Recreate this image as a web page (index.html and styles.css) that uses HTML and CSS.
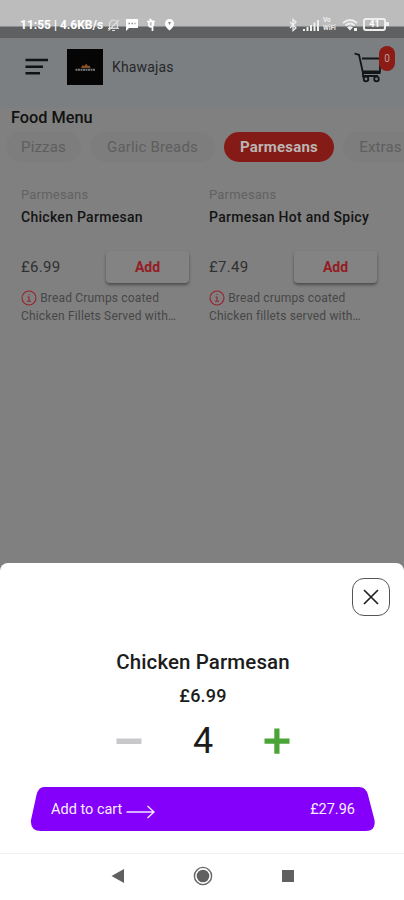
FILE: index.html
```html
<!DOCTYPE html>
<html lang="en">
<head>
<meta charset="utf-8">
<title>Khawajas</title>
<link rel="stylesheet" href="styles.css">
</head>
<body>
<div class="phone">
  <div class="status">
    <div class="status-left">
      <span class="clock">11:55 | 4.6KB/s</span>
      <svg width="13" height="14" viewBox="0 0 13 14" fill="none" stroke="#ddd" stroke-width="1.2"><path d="M2.5 10V6a4 4 0 0 1 8 0v4zM1 10.5h11M1.5 12.5L12 2M5 12.5h3"/></svg>
      <svg class="chat" width="14" height="13" viewBox="0 0 14 13"><path fill="#fff" d="M1 1h12v9H4l-3 3z"/><path stroke="#888" stroke-width="1.5" stroke-dasharray="1.5 1.5" d="M3.5 5.5h7"/></svg>
      <svg class="pay" width="10" height="14" viewBox="0 0 10 14" fill="none" stroke="#fff" stroke-width="1.7"><path d="M1 3.5h8M3.5 1l3 2.500v9.500M3 4v3.500q0 1.500 3.500 1.500M7 4q2 4-3.500 5"/></svg>
      <svg class="pin" width="11" height="13" viewBox="0 0 11 13"><path fill="#fff" d="M5.500 1a4.500 4.500 0 0 1 4.500 4.500Q10 9 5.500 12.500Q1 9 1 5.500A4.500 4.500 0 0 1 5.500 1"/><path fill="#888" d="M4 4h3L5.500 7z"/></svg>
    </div>
    <div class="status-right">
      <svg width="9" height="14" viewBox="0 0 9 14" fill="none" stroke="#eee" stroke-width="1.300"><path d="M1 4l6 6-3 2.500v-11L7 4l-6 6"/></svg>
      <svg class="signal" width="16" height="12" viewBox="0 0 16 12" fill="#eee"><path d="M0 10h2v2H0zM3.500 8h2v4h-2zM7 6h2v6H7zM10.500 3.500h2V12h-2zM14 1h2v11h-2z"/></svg>
      <span class="volte"><span>Vo</span><span>WiFi</span></span>
      <svg class="wifi" width="16" height="14" viewBox="0 0 16 14" fill="none" stroke="#eee" stroke-width="1.700"><path d="M1 5q7-6 14 0M3.500 7.500q4.500-4 9 0"/><path fill="#eee" stroke="none" d="M5 9.200q3-2 6 0l-3 3.300zM12 10h3v3h-3z"/></svg>
      <span class="battery">41</span>
    </div>
  </div>

  <header class="header">
    <svg class="menu" width="24" height="18" viewBox="0 0 24 18" fill="none" stroke="#111214" stroke-width="2.600"><path d="M.5 2h22.500M.5 8.700h17.500M.5 15.300h14.500"/></svg>
    <svg class="logo" width="36" height="36" viewBox="0 0 36 36"><path fill="#050505" d="M0 0h36v36H0z"/><path fill="#84502a" d="M14 19l1.500-3 2 1 1.500-2.500 2 2.500 1.500-.5 1 2.500z"/><path stroke="#777" stroke-width="2" stroke-dasharray="2 .5" d="M8.500 20.800h19.500"/></svg>
    <span class="shop">Khawajas</span>
    <div class="cart">
      <svg width="30" height="32" viewBox="0 0 30 32" fill="none" stroke="#141517" stroke-width="1.800"><path d="M.5 1.500l4.500 1.300 4 18.200h17.500M8 6.500H28M8.700 19.500H26V9"/><circle cx="12" cy="27" r="2.300"/><circle cx="22.500" cy="27" r="2.300"/><path d="M9 20.500v5M9 24h15"/></svg>
      <span class="badge">0</span>
    </div>
  </header>

  <main class="main">
    <h1>Food Menu</h1>
    <nav class="tabs">
      <span class="tab tab-pizza">Pizzas</span>
      <span class="tab tab-garlic">Garlic Breads</span>
      <span class="tab active">Parmesans</span>
      <span class="tab tab-extras">Extras</span>
    </nav>
    <div class="items">
      <article class="item">
        <div class="category">Parmesans</div>
        <h2>Chicken Parmesan</h2>
        <div class="buy"><span class="price">£6.99</span><span class="add">Add</span></div>
        <p><svg class="info" width="16" height="16" viewBox="0 0 16 16" fill="none" stroke="#96232a" stroke-width="1.100"><circle cx="8" cy="8" r="7"/><path d="M6.500 7H8v4M6 11.200h4M7.500 4.500h1"/></svg> Bread Crumps coated<br><span class="second">Chicken Fillets Served with…</span></p>
      </article>
      <article class="item">
        <div class="category">Parmesans</div>
        <h2>Parmesan Hot and Spicy</h2>
        <div class="buy"><span class="price">£7.49</span><span class="add">Add</span></div>
        <p><svg class="info" width="16" height="16" viewBox="0 0 16 16" fill="none" stroke="#96232a" stroke-width="1.100"><circle cx="8" cy="8" r="7"/><path d="M6.500 7H8v4M6 11.200h4M7.500 4.500h1"/></svg> Bread crumps coated<br><span class="second">Chicken fillets served with…</span></p>
      </article>
    </div>
  </main>

  <section class="sheet">
    <div class="close"><svg width="16" height="16" viewBox="0 0 16 16" stroke="#222" stroke-width="1.700"><path d="M1 1l14 14M15 1L1 15"/></svg></div>
    <h3>Chicken Parmesan</h3>
    <div class="unit">£6.99</div>
    <div class="stepper">
      <svg width="26" height="26" viewBox="0 0 26 26"><path fill="#c8c7ca" d="M.5 10.500h25v5.500H.5z"/></svg>
      <span class="qty">4</span>
      <svg width="26" height="26" viewBox="0 0 26 26"><path fill="#4aa536" d="M10.300.5h5.200v10h10v5.300h-10v10h-5.200v-10H.5v-5.300h9.800z"/></svg>
    </div>
    <div class="checkout">
      <svg class="shape" width="346" height="44" viewBox="0 0 346 44"><path fill="#8400fb" d="M15 0H330Q337 0 339 8L345.500 33Q347 44 337 44H12Q1 44 2 33L7.500 8Q9.500 0 15 0Z"/></svg>
      <span class="label">Add to cart</span>
      <svg class="arrow" width="29" height="14" viewBox="0 0 29 14" fill="none" stroke="#f4e9ff" stroke-width="1.400"><path d="M.5 7H28M21.500 1L28 7l-6.500 6"/></svg>
      <span class="total">£27.96</span>
    </div>
  </section>

  <footer class="navbar">
    <svg width="14" height="16" viewBox="0 0 14 16"><path fill="#606060" d="M13 1v14L.5 8z"/></svg>
    <svg width="20" height="20" viewBox="0 0 20 20"><circle cx="10" cy="10" r="8.600" fill="none" stroke="#666" stroke-width="1.400"/><circle cx="10" cy="10" r="6.300" fill="#606060"/></svg>
    <svg width="14" height="14" viewBox="0 0 14 14"><path fill="#606060" d="M1 1h12v12H1z"/></svg>
  </footer>
</div>
</body>
</html>
```
FILE: styles.css
```css
* { box-sizing: border-box; }
body { margin: 0; font-family: Roboto, "Liberation Sans", sans-serif; }
svg { display: block; flex: none; }
h1, h2, h3, p { margin: 0; }
.phone { width: 404px; height: 900px; overflow: hidden; display: flex; flex-direction: column; background: #808080; white-space: nowrap; }

.status { height: 38px; flex: none; padding: 11px 18px 0 20px; display: flex; justify-content: space-between; background: linear-gradient(#bcbcbc 0 26px, #5f6061 27px); color: #fff; }
.status-left, .status-right { display: flex; align-items: center; height: 27px; }
.clock { font-size: 12px; font-weight: 700; width: 87px; }
.chat { margin-left: 5px; }
.pay { margin-left: 7px; }
.pin { margin-left: 8px; }
.signal { margin-left: 5px; }
.volte { margin-left: 4px; width: 15px; display: grid; gap: 1px; font-size: 6.500px; line-height: 7px; font-weight: 700; color: #eee; }
.wifi { margin-left: 4px; }
.battery { margin-left: 5px; width: 23px; height: 13px; border: 2px solid #eee; border-radius: 3px; font-size: 9px; line-height: 9px; font-weight: 700; text-align: center; position: relative; }
.battery::after { content: ""; position: absolute; right: -5px; top: 2px; width: 3px; height: 4px; background: #eee; }

.header { height: 70px; flex: none; background: #7c7f81; display: flex; align-items: flex-start; padding: 11px 9px 0 25px; }
.menu { margin-top: 9px; }
.logo { margin-left: 18px; }
.shop { margin: 9px 0 0 9px; font-size: 14px; line-height: 18px; letter-spacing: .15px; color: #25272a; }
.cart { position: relative; margin: 3px 11px 0 auto; }
.badge { position: absolute; left: 25px; top: -6px; width: 16px; height: 25px; border-radius: 8px; background: #8c1b16; color: #b9a09e; font-size: 10px; line-height: 25px; text-align: center; }

.main { flex: none; height: 455px; }
h1 { padding: 0 11px; font-size: 16.300px; line-height: 20px; font-weight: 500; color: #111; }
.tabs { display: flex; margin-top: 4px; padding-left: 6px; gap: 9px; overflow: hidden; }
.tab { height: 30px; flex: none; border-radius: 15px; background: #7d7d7d; color: #5e5e5e; font-size: 15px; line-height: 30px; letter-spacing: .15px; text-align: center; }
.tab-pizza { width: 75px; }
.tab-garlic { width: 125px; }
.active { width: 110px; background: #841b16; color: #bcb5b4; font-weight: 700; font-size: 15px; letter-spacing: .2px; }
.tab-extras { width: 75px; }
.items { display: grid; grid-template-columns: 168px 168px; gap: 20px; padding: 24px 21px 0; }
.category { font-size: 13px; line-height: 18px; letter-spacing: .2px; color: #626262; }
h2 { margin-top: 4px; font-size: 14px; line-height: 18px; font-weight: 500; letter-spacing: .28px; color: #141414; }
.buy { display: flex; justify-content: space-between; align-items: center; margin-top: 25px; height: 32px; }
.price { font-size: 15px; letter-spacing: .3px; color: #303030; }
.add { width: 83px; height: 32px; border-radius: 4px; background: #838383; box-shadow: 0 2px 3px #4c4c4c; color: #931c25; font-size: 14px; line-height: 32px; font-weight: 700; text-align: center; }
p { margin-top: 6px; font-size: 12px; line-height: 18px; letter-spacing: .17px; color: #474747; }
.info { display: inline-block; vertical-align: -4px; }

.sheet { height: 290px; flex: none; background: #fff; border-radius: 8px 8px 0 0; display: flex; flex-direction: column; align-items: center; padding-top: 15px; color: #1c1c1c; }
.close { align-self: flex-end; margin-right: 14px; width: 38px; height: 38px; border: 1px solid #555; border-radius: 12px; display: grid; place-items: center; }
h3 { margin: 34px 0 0 2px; font-size: 20.500px; line-height: 24px; font-weight: 500; letter-spacing: .1px; }
.unit { margin-top: 12px; font-size: 18px; line-height: 20px; font-weight: 500; letter-spacing: .2px; padding-left: 2px; }
.stepper { margin: 16px 0 0 2px; width: 174px; height: 38px; display: flex; justify-content: space-between; align-items: center; }
.qty { font-size: 36px; line-height: 38px; }
.checkout { position: relative; width: 346px; height: 44px; margin-top: 27px; padding: 0 20px 0 22px; display: flex; align-items: center; color: #f7efff; font-size: 14.500px; }
.shape { position: absolute; inset: 0; }
.label, .arrow, .total { position: relative; }
.arrow { margin: 5px 0 0 4px; }
.total { margin-left: auto; }

.navbar { flex: 1; background: #fff; border-top: 1px solid #f1f1f1; display: flex; align-items: center; justify-content: center; gap: 68px; padding: 0 0 2px 2px; }
```
